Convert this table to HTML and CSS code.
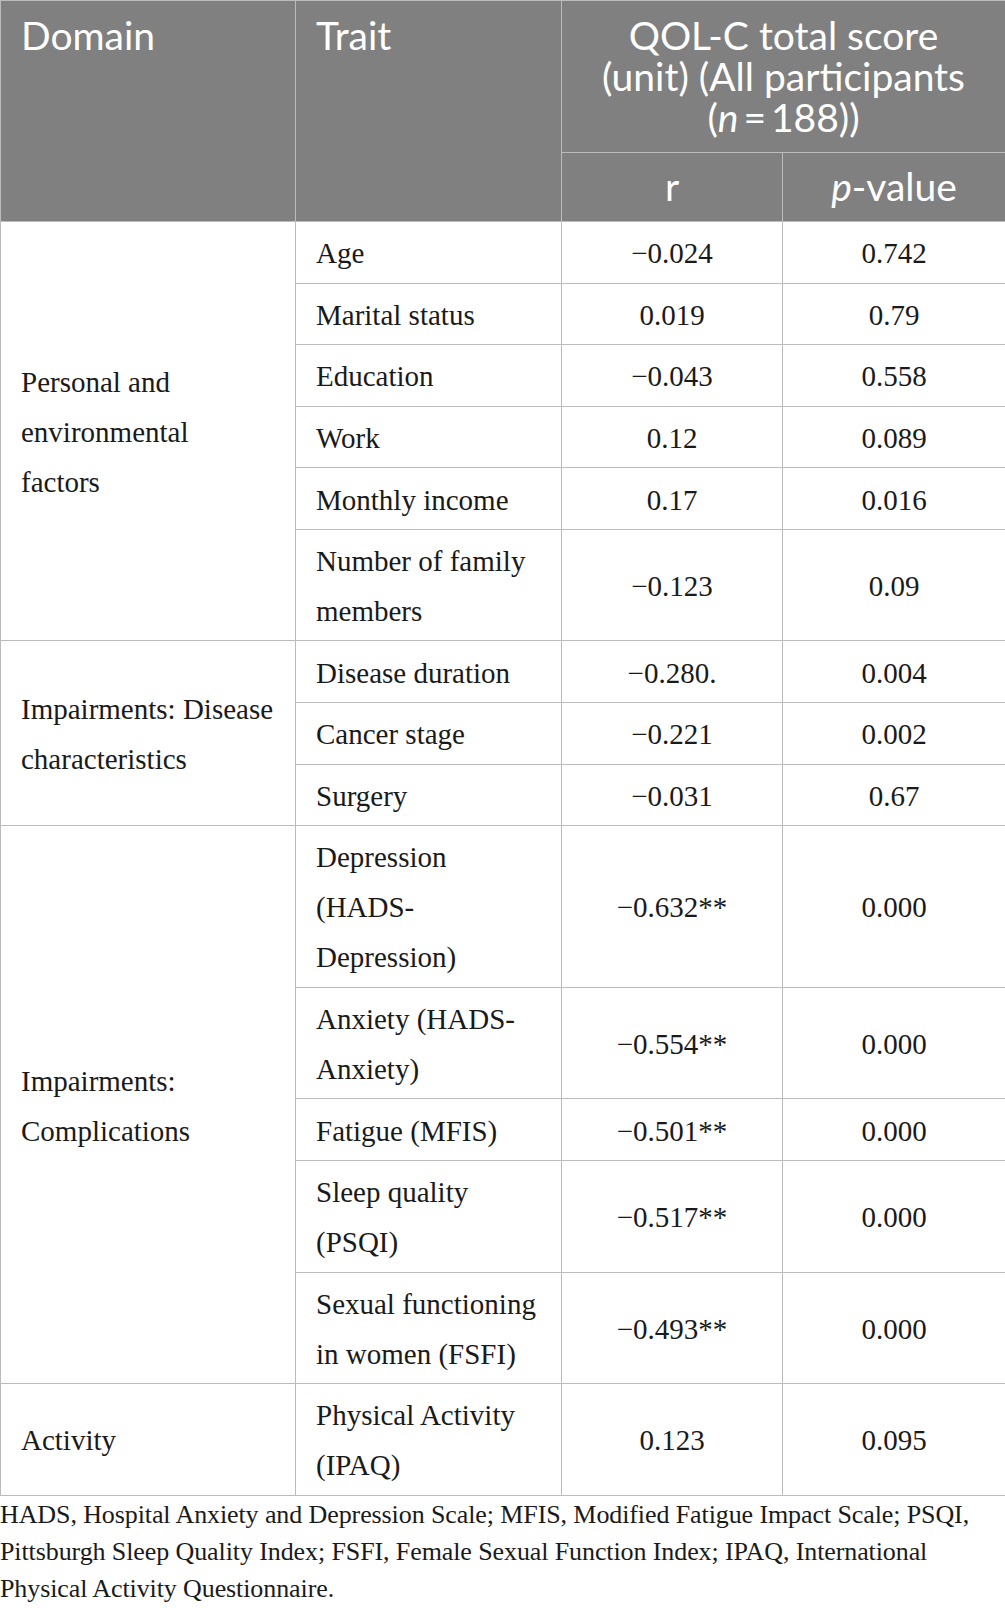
FILE: index.html
```html
<!DOCTYPE html>
<html>
<head>
<meta charset="utf-8">
<link rel="stylesheet" href="styles.css">
</head>
<body>
<div class="wrap">
<table class="tbl">
  <colgroup>
    <col class="c1"><col class="c2"><col class="c3"><col class="c4">
  </colgroup>
  <thead>
    <tr>
      <th rowspan="2" class="h-left">Domain</th>
      <th rowspan="2" class="h-left">Trait</th>
      <th colspan="2" class="h-group">QOL-C total score<br>(unit) (All participants<br>(<i>n</i>&#8201;=&#8201;188))</th>
    </tr>
    <tr>
      <th class="h-sub">r</th>
      <th class="h-sub"><i>p</i>-value</th>
    </tr>
  </thead>
  <tbody>
    <tr><td rowspan="6" class="dom">Personal and environmental<br>factors</td><td class="trait">Age</td><td class="num">&minus;0.024</td><td class="num">0.742</td></tr>
    <tr><td class="trait">Marital status</td><td class="num">0.019</td><td class="num">0.79</td></tr>
    <tr><td class="trait">Education</td><td class="num">&minus;0.043</td><td class="num">0.558</td></tr>
    <tr><td class="trait">Work</td><td class="num">0.12</td><td class="num">0.089</td></tr>
    <tr><td class="trait">Monthly income</td><td class="num">0.17</td><td class="num">0.016</td></tr>
    <tr><td class="trait">Number of family members</td><td class="num">&minus;0.123</td><td class="num">0.09</td></tr>
    <tr><td rowspan="3" class="dom">Impairments: Disease characteristics</td><td class="trait">Disease duration</td><td class="num">&minus;0.280.</td><td class="num">0.004</td></tr>
    <tr><td class="trait">Cancer stage</td><td class="num">&minus;0.221</td><td class="num">0.002</td></tr>
    <tr><td class="trait">Surgery</td><td class="num">&minus;0.031</td><td class="num">0.67</td></tr>
    <tr><td rowspan="5" class="dom">Impairments: Complications</td><td class="trait">Depression (HADS-Depression)</td><td class="num">&minus;0.632**</td><td class="num">0.000</td></tr>
    <tr><td class="trait">Anxiety (HADS-Anxiety)</td><td class="num">&minus;0.554**</td><td class="num">0.000</td></tr>
    <tr><td class="trait">Fatigue (MFIS)</td><td class="num">&minus;0.501**</td><td class="num">0.000</td></tr>
    <tr><td class="trait">Sleep quality (PSQI)</td><td class="num">&minus;0.517**</td><td class="num">0.000</td></tr>
    <tr><td class="trait">Sexual functioning in women (FSFI)</td><td class="num">&minus;0.493**</td><td class="num">0.000</td></tr>
    <tr><td class="dom">Activity</td><td class="trait">Physical Activity (IPAQ)</td><td class="num">0.123</td><td class="num">0.095</td></tr>
  </tbody>
</table>
<p class="note">HADS, Hospital Anxiety and Depression Scale; MFIS, Modified Fatigue Impact Scale; PSQI, Pittsburgh Sleep Quality Index; FSFI, Female Sexual Function Index; IPAQ, International Physical Activity Questionnaire.</p>
</div>
</body>
</html>
```
FILE: styles.css
```css
html, body {
  margin: 0;
  padding: 0;
  background: #ffffff;
}

.wrap {
  width: 1005px;
}

.tbl {
  width: 1005px;
  border-collapse: collapse;
  table-layout: fixed;
  font-family: "Liberation Serif", "Times New Roman", serif;
  font-size: 29px;
  color: #1a1a1a;
}

.c1 { width: 295px; }
.c2 { width: 266px; }
.c3 { width: 221px; }
.c4 { width: 223px; }

.tbl th,
.tbl td {
  border: 1px solid #bcbcbc;
}

.tbl thead th {
  background: #808080;
  color: #ffffff;
  font-family: Lato, "Open Sans", sans-serif;
  font-weight: 400;
  font-size: 39px;
  line-height: 41px;
}

.h-left {
  text-align: left;
  vertical-align: top;
  padding: 14px 10px 0 20px;
}

.h-group {
  text-align: center;
  vertical-align: top;
  padding: 14px 10px 14px 10px;
}

.h-sub {
  text-align: center;
  padding: 13px 10px 14px 10px;
}

.tbl td {
  line-height: 50px;
  padding: 6.2px 10px 4.4px 20px;
  vertical-align: middle;
}

.tbl td.dom {
  padding-right: 6px;
}

.tbl td.trait {
  padding-right: 14px;
}

.tbl td.num {
  text-align: center;
  padding-left: 10px;
  padding-right: 10px;
}

.note {
  margin: 0;
  font-family: "Liberation Serif", "Times New Roman", serif;
  font-size: 26px;
  letter-spacing: -0.1px;
  line-height: 37px;
  color: #1a1a1a;
}
```
